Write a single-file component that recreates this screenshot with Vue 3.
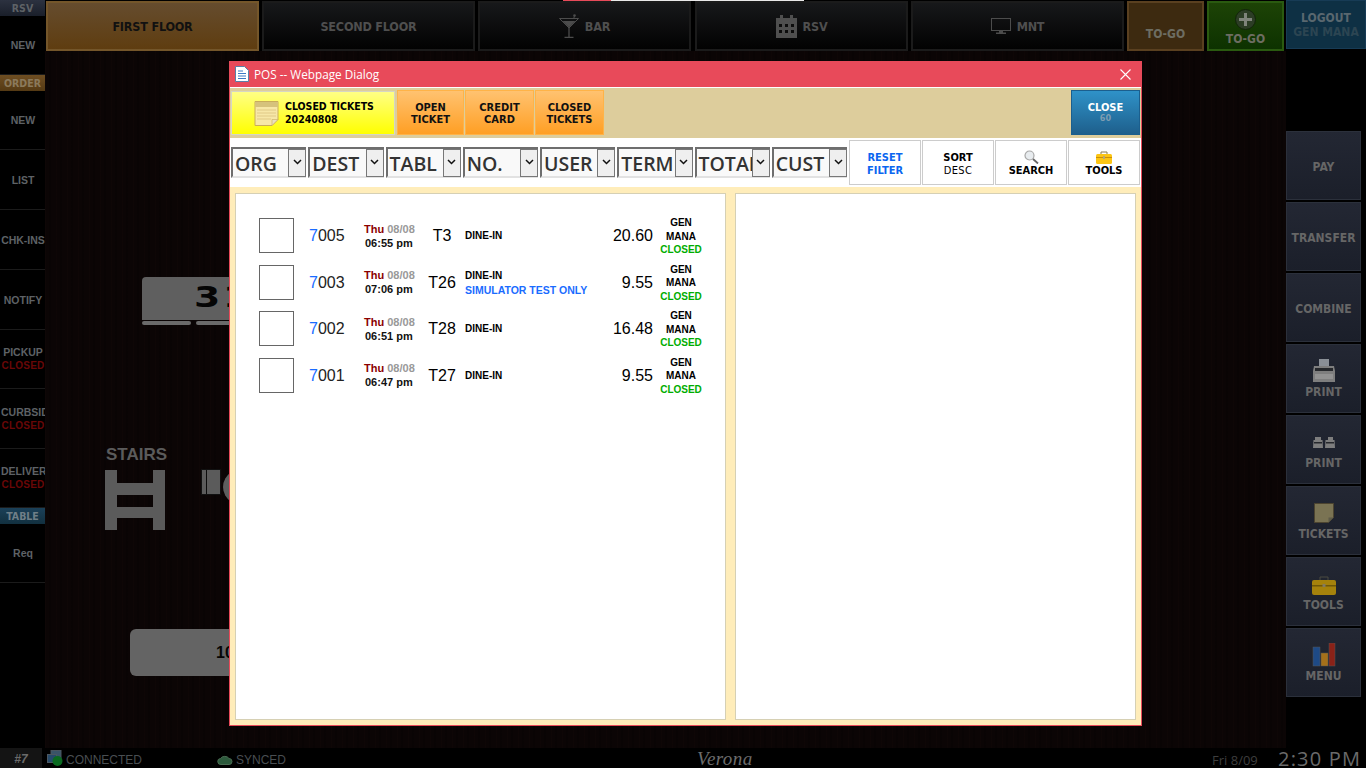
<script setup>
const sideItems = [
  { head: 'RSV', tone: 'navy' },
  { label: 'NEW', h: 59 },
  { head: 'ORDER', tone: 'amber' },
  { label: 'NEW', h: 59 },
  { label: 'LIST', h: 60 },
  { label: 'CHK-INS', h: 60 },
  { label: 'NOTIFY', h: 60 },
  { label: 'PICKUP', sub: 'CLOSED', h: 59 },
  { label: 'CURBSIDE', sub: 'CLOSED', h: 60 },
  { label: 'DELIVERY', sub: 'CLOSED', h: 59 },
  { head: 'TABLE', tone: 'teal' },
  { label: 'Req', h: 59 },
]

const filters = ['ORG', 'DEST', 'TABL', 'NO.', 'USER', 'TERM', 'TOTAL', 'CUST']

const tickets = [
  { id: '005', time: '06:55 pm', table: 'T3', amount: '20.60' },
  { id: '003', time: '07:06 pm', table: 'T26', note: 'SIMULATOR TEST ONLY', amount: '9.55' },
  { id: '002', time: '06:51 pm', table: 'T28', amount: '16.48' },
  { id: '001', time: '06:47 pm', table: 'T27', amount: '9.55' },
]
</script>

<template>
  <div class="pos">
    <div class="progress"><span></span></div>

    <div class="main">
      <aside class="side">
        <template v-for="(item, i) in sideItems" :key="i">
          <div v-if="item.head" class="side-head" :class="item.tone">{{ item.head }}</div>
          <div v-else class="side-item" :style="{ height: item.h + 'px' }">
            <div>{{ item.label }}</div>
            <div v-if="item.sub" class="side-sub">{{ item.sub }}</div>
          </div>
        </template>
      </aside>

      <div class="stage">
        <header class="top">
          <button class="tab active">FIRST FLOOR</button>
          <button class="tab">SECOND FLOOR</button>
          <button class="tab">
            <svg width="20" height="24" viewBox="0 0 20 24">
              <path d="M.5 4.500h19L10 14z" fill="none" stroke="#4c4c4c" />
              <path d="M3.500 7h13L10 13.500z" fill="#4c4c4c" />
              <path d="M10 14v9M5.500 23.500h9" stroke="#4c4c4c" stroke-width="1.300" />
              <path d="M14.500 5l1-3" stroke="#4c4c4c" />
              <circle cx="15.500" cy="1.500" r="1.300" fill="#4c4c4c" />
            </svg>
            BAR
          </button>
          <button class="tab">
            <svg width="21" height="24" viewBox="0 0 21 24">
              <path d="M0 4h4V1h3v3h7V1h3v3h4v20H0z" fill="#4f4f4f" />
              <g fill="#0c0c0c">
                <rect x="3" y="10" width="3" height="3" /><rect x="9" y="10" width="3" height="3" /><rect x="15" y="10" width="3" height="3" />
                <rect x="3" y="16" width="3" height="3" /><rect x="9" y="16" width="3" height="3" /><rect x="15" y="16" width="3" height="3" />
              </g>
            </svg>
            RSV
          </button>
          <button class="tab">
            <svg width="20" height="16" viewBox="0 0 20 16">
              <rect x="0.500" y="0.500" width="19" height="12" fill="none" stroke="#4c4c4c" />
              <path d="M8 13h4v1.500h3V16H5v-1.500h3z" fill="#4c4c4c" />
            </svg>
            MNT
          </button>
          <button class="togo brown"><span>TO-GO</span></button>
          <button class="togo green">
            <svg class="plus" width="21" height="21" viewBox="0 0 21 21">
              <circle cx="10.500" cy="10.500" r="10" fill="#2c3d25" stroke="#12240a" />
              <path d="M9 4h3v5h5v3h-5v5H9v-5H4V9h5z" fill="#7f847b" />
            </svg>
            <span>TO-GO</span>
          </button>
          <button class="logout">
            <span>LOGOUT</span>
            <span class="logout-user">GEN MANA</span>
          </button>
        </header>

        <div class="body">
          <div class="floor">
            <div class="floor-table big">
              <span>31</span>
              <i class="foot"></i><i class="foot"></i>
            </div>
            <div class="stairs">
              <span>STAIRS</span>
              <svg width="60" height="60" viewBox="0 0 60 60">
                <path d="M0 0h12v13h36V0h12v60H48V48H12v12H0zM12 25v12h36V25z" fill="#5b5b5b" fill-rule="evenodd" />
              </svg>
            </div>
            <div class="floor-box"></div>
            <div class="floor-round"></div>
            <div class="floor-table wide"><b>10</b></div>
          </div>

          <nav class="rail">
            <button class="rail-btn">PAY</button>
            <button class="rail-btn">TRANSFER</button>
            <button class="rail-btn">COMBINE</button>
            <button class="rail-btn has-icon">
              <svg width="24" height="24" viewBox="0 0 24 24">
                <path d="M7 0h10v8H7z" fill="#8a8f96" />
                <path d="M2 7h20l1 5v11H1V12z" fill="#7e7e7e" />
                <path d="M3 9h18v3H3z" fill="#26282c" />
                <path d="M3 15h18v5H3z" fill="#929292" />
              </svg>
              PRINT
            </button>
            <button class="rail-btn has-icon gap-7">
              <svg width="24" height="12" viewBox="0 0 24 12">
                <g fill="#7e7e7e">
                  <path d="M3 0h6v3h1.500L11 11H1l.5-8H3z" />
                  <path d="M16 0h5v3h1.500L23 11H13l.5-8H16z" />
                </g>
                <path d="M2 5h8v1.500H2zM14 5h8v1.500h-8z" fill="#26282c" />
              </svg>
              PRINT
            </button>
            <button class="rail-btn has-icon gap-4">
              <svg width="20" height="20" viewBox="0 0 20 20">
                <path d="M.5.500h19v14l-5 5H.500z" fill="#7a7353" stroke="#4c4430" />
                <path d="M14.500 19.500v-5h5z" fill="#5d5a48" />
              </svg>
              TICKETS
            </button>
            <button class="rail-btn has-icon gap-3">
              <svg width="24" height="19" viewBox="0 0 24 19">
                <path d="M8 4V1h8v3" fill="none" stroke="#4a4a40" />
                <rect y="4" width="24" height="15" rx="2" fill="#a5820c" />
                <rect y="9" width="24" height="1.500" fill="#6e5708" />
                <rect x="10.500" y="8" width="3" height="3" fill="#827a60" />
              </svg>
              TOOLS
            </button>
            <button class="rail-btn has-icon">
              <svg width="24" height="24" viewBox="0 0 24 24">
                <rect x="1" y="4" width="7" height="19" fill="#1e4a86" stroke="#555" stroke-width=".5" />
                <rect x="9" y="10" width="7" height="13" fill="#a5701a" stroke="#555" stroke-width=".5" />
                <rect x="17" y="0" width="6" height="23" fill="#8a2218" stroke="#555" stroke-width=".5" />
              </svg>
              MENU
            </button>
          </nav>
        </div>
      </div>
    </div>

    <footer class="status">
      <div class="station">#7</div>
      <svg class="net" width="16" height="16" viewBox="0 0 16 16">
        <rect x="4" y="0.500" width="10" height="8" fill="#3a5468" stroke="#4b5660" />
        <rect x="0.500" y="4.500" width="9" height="8" fill="#264a6a" stroke="#4b5660" />
        <circle cx="10.500" cy="11" r="5" fill="#0a6a20" />
      </svg>
      <span class="status-text conn">CONNECTED</span>
      <svg class="cloud" width="16" height="11" viewBox="0 0 16 11">
        <path d="M4 10.500a3 3 0 0 1-.500-6A5 4.500 0 0 1 12 4.500a3 3 0 0 1 0 6z" fill="#2c5a3c" stroke="#4a6a52" />
      </svg>
      <span class="status-text">SYNCED</span>
      <span class="brand">Verona</span>
      <span class="date">Fri 8/09</span>
      <span class="clock">2:30 PM</span>
    </footer>

    <section class="dialog">
      <div class="titlebar">
        <svg width="14" height="16" viewBox="0 0 14 16">
          <path d="M.5.500h9l4 4v11H.5z" fill="#fff" stroke="#5a7fa8" />
          <path d="M3 5h5M3 7.500h8M3 10h8M3 12.500h8" stroke="#3b78c4" />
        </svg>
        <span class="title">POS -- Webpage Dialog</span>
        <svg class="x" width="11" height="11" viewBox="0 0 11 11">
          <path d="M.5.500l10 10M10.500.500l-10 10" stroke="#fff" stroke-width="1.100" />
        </svg>
      </div>

      <div class="toolbar">
        <div class="current">
          <svg width="25" height="25" viewBox="0 0 25 25">
            <path d="M1 .5h23v18l-6 6H1z" fill="#f7e7a8" stroke="#c9ac5c" />
            <path d="M1 1h23v5H1z" fill="#d6c27c" />
            <path d="M3 9h19M3 12h19M3 15h19M3 18h14" stroke="#e0c987" />
            <path d="M18 24.500v-6h6z" fill="#e9e0c0" stroke="#c9ac5c" stroke-width=".6" />
          </svg>
          <div class="current-text">CLOSED TICKETS<br />20240808</div>
        </div>
        <button class="orange">OPEN<br />TICKET</button>
        <button class="orange">CREDIT<br />CARD</button>
        <button class="orange">CLOSED<br />TICKETS</button>
        <button class="close">CLOSE<small>60</small></button>
      </div>

      <div class="filters">
        <div v-for="f in filters" :key="f" class="select">
          <span class="select-text">{{ f }}</span>
          <span class="select-arrow">
            <svg width="9" height="6" viewBox="0 0 9 6"><path d="M1 1l3.500 3.500L8 1" fill="none" stroke="#111" stroke-width="1.500" /></svg>
          </span>
        </div>
        <button class="tool blue">RESET<br />FILTER</button>
        <button class="tool">SORT<br /><span class="thin">DESC</span></button>
        <button class="tool">
          <svg width="15" height="14" viewBox="0 0 15 14">
            <circle cx="5.500" cy="5.500" r="4.500" fill="#e8ecef" stroke="#a8a8a8" stroke-width="1.200" />
            <path d="M9 9l5 4.500" stroke="#666" stroke-width="1.800" />
          </svg>
          SEARCH
        </button>
        <button class="tool">
          <svg width="16" height="13" viewBox="0 0 16 13">
            <path d="M5 3V1h6v2" fill="none" stroke="#8a7a50" />
            <rect y="3" width="16" height="10" rx="1.500" fill="#fcc514" />
            <rect y="6" width="16" height="1" fill="#c98f08" />
            <rect x="7" y="5" width="2" height="3" fill="#b8a878" />
          </svg>
          TOOLS
        </button>
      </div>

      <div class="panels">
        <div class="panel list">
          <div v-for="t in tickets" :key="t.id" class="ticket">
            <div class="check"></div>
            <div class="num"><span class="num-lead">7</span>{{ t.id }}</div>
            <div class="when">
              <div><span class="day">Thu</span> <span class="dim">08/08</span></div>
              <div class="time">{{ t.time }}</div>
            </div>
            <div class="tbl">{{ t.table }}</div>
            <div class="kind">
              <div>DINE-IN</div>
              <div v-if="t.note" class="note">{{ t.note }}</div>
            </div>
            <div class="amount">{{ t.amount }}</div>
            <div class="who">
              <div>GEN</div>
              <div>MANA</div>
              <div class="closed">CLOSED</div>
            </div>
          </div>
        </div>
        <div class="panel"></div>
      </div>
    </section>
  </div>
</template>

<style>
html,
body {
  margin: 0;
  background: #000;
}
</style>

<style scoped>
.pos {
  position: relative;
  width: 1366px;
  height: 768px;
  overflow: hidden;
  background: #000;
  font-family: "Liberation Sans", Arial, sans-serif;
  display: flex;
  flex-direction: column;
}

button {
  font-family: "DejaVu Sans Condensed", "DejaVu Sans", sans-serif;
  font-stretch: condensed;
  font-weight: 700;
  margin: 0;
  padding: 0;
  cursor: pointer;
}

.progress {
  position: absolute;
  top: 0;
  left: 563px;
  width: 241px;
  height: 1px;
  background: #e9e9e9;
  z-index: 3;
}

.progress span {
  display: block;
  width: 48px;
  height: 1px;
  background: #e84a5a;
}

.main {
  flex: 1;
  display: flex;
  min-height: 0;
}

/* left column */
.side {
  width: 45px;
  flex: none;
  background: #000;
  font-size: 10.500px;
  font-weight: 700;
  color: #5e6266;
}

.side-head {
  height: 16px;
  line-height: 16px;
  text-align: center;
  font: 700 10.500px/16px "DejaVu Sans Condensed", "DejaVu Sans", sans-serif;
  font-stretch: condensed;
}

.navy {
  background: linear-gradient(#2c3240, #1a1f2a);
}

.amber {
  background: linear-gradient(#6e4e22, #553a14);
  color: #8b7a5c;
}

.teal {
  background: linear-gradient(#1b4058, #12303f);
  color: #6f7f88;
}

.side-item {
  box-sizing: border-box;
  border-bottom: 1px solid #1b1b1b;
  padding-left: 1px;
  display: flex;
  flex-direction: column;
  justify-content: center;
  text-align: center;
  overflow: hidden;
  white-space: nowrap;
  line-height: 14px;
}

.side-sub {
  color: #6a0707;
  font-size: 10px;
  letter-spacing: 0.2px;
}

.stage {
  flex: 1;
  display: flex;
  flex-direction: column;
  min-width: 0;
}

/* top bar */
.top {
  height: 51px;
  flex: none;
  display: flex;
  background: #000;
  padding: 1px 0 0 1px;
  box-sizing: border-box;
}

.tab {
  width: 213px;
  height: 50px;
  margin-right: 3px;
  display: flex;
  align-items: center;
  justify-content: center;
  gap: 6px;
  border: 2px solid #1b1b1b;
  background: linear-gradient(#17181a, #020202);
  color: #4f4f4f;
  font-size: 12.500px;
  letter-spacing: -0.2px;
}

.tab:nth-child(3) {
  margin-right: 4px;
}

.tab.active {
  border-color: #74562a;
  background: linear-gradient(#654c2e, #5f3d10);
  color: #111;
}

.togo {
  width: 77px;
  height: 50px;
  margin-right: 3px;
  border: 2px solid;
  font-size: 12px;
  display: flex;
  flex-direction: column;
  align-items: center;
  justify-content: flex-end;
  color: #6d6d62;
}

.togo.brown {
  border-color: #5a4020;
  background: #3d2a10;
  padding-bottom: 8px;
}

.togo.green {
  border-color: #2a5a10;
  background: linear-gradient(#1d4306, #0d3200);
  padding-bottom: 3px;
  margin-right: 2px;
}

.plus {
  margin-bottom: 2px;
}

.logout {
  width: 80px;
  height: 49px;
  border: 1px solid #173b55;
  background: #0e3044;
  color: #59676f;
  font-size: 12px;
  display: flex;
  flex-direction: column;
  align-items: center;
  justify-content: center;
  line-height: 14px;
  position: relative;
  top: -1px;
}

.logout-user {
  color: #2c4552;
}

.body {
  flex: 1;
  display: flex;
  min-height: 0;
}

/* dimmed floor plan, free canvas */
.floor {
  position: relative;
  flex: 1;
  background:
    repeating-linear-gradient(90deg, rgba(40, 18, 14, 0.1) 0 1px, transparent 1px 4px, rgba(0, 0, 0, 0.18) 4px 6px, transparent 6px 11px),
    #0b0505;
}

.floor-table {
  position: absolute;
  background: #5f5f5f;
  border-radius: 4px;
  color: #050505;
  box-sizing: border-box;
}

.floor-table.big {
  left: 97px;
  top: 226px;
  width: 140px;
  height: 43px;
  border-radius: 4px 0 0 0;
}

.floor-table.big span {
  position: absolute;
  left: 52px;
  top: 1px;
  font: 700 28px/40px "DejaVu Sans", sans-serif;
  letter-spacing: 2px;
  transform: scaleX(1.35);
  transform-origin: left center;
}

.foot {
  position: absolute;
  top: 44px;
  left: 0;
  width: 49px;
  height: 4px;
  background: #6a6a6a;
  border-radius: 2px;
}

.foot + .foot {
  left: 54px;
  width: 80px;
}

.floor-table.wide {
  left: 85px;
  top: 578px;
  width: 190px;
  height: 47px;
  border-radius: 6px;
  background: #646464;
  text-align: center;
  font-size: 16px;
  line-height: 47px;
}

.stairs {
  position: absolute;
  left: 60px;
  top: 392px;
  color: #5b5b5b;
  font-size: 17px;
  font-weight: 700;
  width: 62px;
}

.stairs span {
  display: block;
  height: 27px;
  line-height: 24px;
  padding-left: 1px;
}

.stairs svg {
  display: block;
}

.floor-box {
  position: absolute;
  left: 157px;
  top: 419px;
  width: 18px;
  height: 24px;
  background: linear-gradient(90deg, #5b5b5b 0 4px, #0b0b0b 4px 5px, #5b5b5b 5px);
  outline: 1px solid #111;
}

.floor-round {
  position: absolute;
  left: 178px;
  top: 414px;
  width: 60px;
  height: 44px;
  border-radius: 50%;
  background: #5e5e5e;
}

/* right column */
.rail {
  width: 80px;
  flex: none;
  height: 664px;
  background: #000;
  padding-top: 80px;
  box-sizing: border-box;
  display: flex;
  flex-direction: column;
  gap: 2px;
}

.rail-btn {
  width: 75px;
  height: 69px;
  flex: none;
  box-sizing: border-box;
  border: 1px solid #2b303b;
  background: linear-gradient(#232733, #1b1f2a);
  color: #666;
  font-size: 12px;
  line-height: 14px;
  padding-top: 2px;
  display: flex;
  flex-direction: column;
  align-items: center;
  justify-content: center;
}

/* label sits at the same height in every button with an icon */
.has-icon {
  justify-content: flex-end;
  padding: 0 0 13px;
}

.has-icon svg {
  margin-bottom: 2px;
}

.gap-7 svg {
  margin-bottom: 7px;
}

.gap-4 svg {
  margin-bottom: 4px;
}

.gap-3 svg {
  margin-bottom: 3px;
}

/* bottom bar */
.status {
  height: 20px;
  flex: none;
  display: flex;
  align-items: flex-end;
  background: #000;
  font-size: 12px;
  color: #494e52;
}

.station {
  width: 42px;
  height: 20px;
  line-height: 22px;
  text-align: center;
  background: #141414;
  font-weight: 700;
  font-style: italic;
  color: #6a6a6a;
}

.net {
  margin-left: 5px;
  margin-bottom: 2px;
}

.status-text {
  margin-left: 3px;
  font-size: 12px;
  line-height: 16px;
}

.conn {
  width: 151px;
}

.cloud {
  margin-bottom: 3px;
}

.brand {
  margin-left: 411px;
  width: 515px;
  font: italic 19px/18px "Liberation Serif", serif;
  letter-spacing: 0.4px;
  color: #6c6c6c;
}

.date {
  font-size: 13px;
  line-height: 16px;
  color: #3e3e3e;
  width: 66px;
  font-family: "Open Sans", sans-serif;
}

.clock {
  font: 20px/18px "Open Sans", sans-serif;
  letter-spacing: 1.200px;
  color: #6a6a6a;
}

/* dialog over the floor */
.dialog {
  position: absolute;
  left: 229px;
  top: 61px;
  width: 913px;
  height: 665px;
  box-sizing: border-box;
  border: 1px solid #e84a5a;
  border-top: 0;
  display: flex;
  flex-direction: column;
  background: #fff;
  z-index: 2;
}

.titlebar {
  height: 26px;
  flex: none;
  display: flex;
  align-items: center;
  padding-left: 5px;
  background: #e84a5a;
  color: #fff;
  font: 11.750px "Open Sans", sans-serif;
}

.title {
  margin-left: 5px;
  flex: 1;
}

.x {
  margin-right: 10px;
}

.toolbar {
  height: 51px;
  flex: none;
  box-sizing: border-box;
  display: flex;
  align-items: flex-start;
  gap: 2px;
  padding: 2px 1px 0 1px;
  background: #ddcd9c;
  border-top: 1px solid #fff;
}

.current {
  box-sizing: border-box;
  width: 164px;
  height: 44px;
  margin-top: 1px;
  border: 1px solid #d6d6c4;
  background: linear-gradient(#ffff85, #ffff00);
  display: flex;
  align-items: center;
  padding-left: 22px;
  gap: 6px;
}

.current-text {
  color: #000;
  font: 700 10.500px/13px "DejaVu Sans Condensed", "DejaVu Sans", sans-serif;
  font-stretch: condensed;
}

.orange {
  width: 67px;
  height: 45px;
  box-sizing: border-box;
  border: 1px solid #ffb347;
  background: linear-gradient(#ffc270, #ff9f24);
  color: #111;
  font-size: 11px;
  line-height: 12px;
  padding-top: 2px;
}

.orange + .orange {
  margin-left: -1px;
  width: 69px;
}

.close {
  margin-left: auto;
  width: 69px;
  height: 45px;
  border: 1px solid #1b5f8e;
  background: linear-gradient(#2f92c8, #1e5f8c);
  color: #fff;
  font-size: 11px;
  display: flex;
  flex-direction: column;
  align-items: center;
  justify-content: center;
  line-height: 11.500px;
  padding-top: 1px;
}

.close small {
  font-size: 9px;
  color: #7d9db2;
}

.filters {
  height: 49px;
  flex: none;
  box-sizing: border-box;
  display: flex;
  align-items: center;
  padding-left: 1px;
  background: #fff;
}

.select {
  width: 75.250px;
  height: 31px;
  box-sizing: border-box;
  flex: none;
  display: flex;
  margin-right: 2px;
  border-top: 2px solid #6e6e6e;
  border-left: 2px solid #6e6e6e;
  border-bottom: 2px solid #e2e2e2;
  background: #f9f9f9;
}

.select-text {
  flex: 1;
  min-width: 0;
  box-sizing: border-box;
  padding-left: 2px;
  overflow: hidden;
  white-space: nowrap;
  font: 600 19.500px/29px "Open Sans", sans-serif;
  color: #333;
}

.select-arrow {
  width: 18px;
  height: 28px;
  flex: none;
  box-sizing: border-box;
  border: 1px solid #777;
  background: #efefef;
  display: flex;
  align-items: center;
  justify-content: center;
  padding-bottom: 2px;
}

.tool {
  width: 72px;
  height: 45px;
  box-sizing: border-box;
  flex: none;
  margin-left: 1px;
  padding-top: 2px;
  border: 1px solid #ccc;
  background: #fff;
  color: #000;
  font-size: 11px;
  line-height: 13px;
  display: flex;
  flex-direction: column;
  align-items: center;
  justify-content: center;
}

.tool.blue {
  color: #0a66f0;
  margin-left: 0;
}

.thin {
  font-weight: 400;
  letter-spacing: 0.4px;
}

.panels {
  flex: 1;
  display: flex;
  gap: 9px;
  padding: 6px 5px 5px;
  background: #ffedba;
  min-height: 0;
}

.panel {
  flex: 1;
  box-sizing: border-box;
  background: #fff;
  border: 1px solid #d6d0b4;
}

.list {
  flex: none;
  width: 491px;
  padding-top: 18.500px;
}

.ticket {
  height: 46.500px;
  display: grid;
  grid-template-columns: 23px 35px 15px 55px 50px 51px 125px 63px 56px;
  align-items: center;
  color: #000;
}

.check {
  grid-column: 2;
  box-sizing: border-box;
  width: 35px;
  height: 35px;
  border: 1px solid #666;
}

.num {
  grid-column: 4;
  font-size: 16px;
  color: #222;
  padding-top: 1px;
}

.num-lead {
  color: #1a6cff;
}

.when {
  font-size: 11px;
  font-weight: 700;
  line-height: 14px;
  white-space: nowrap;
}

.day {
  color: #8b0000;
}

.dim {
  color: #999;
}

.time {
  color: #111;
  padding-left: 1px;
}

.tbl {
  font-size: 16px;
  text-align: center;
  padding: 1px 0 0 5px;
  white-space: nowrap;
}

.kind {
  font-size: 10px;
  font-weight: 700;
  line-height: 14px;
  white-space: nowrap;
  padding-top: 1px;
}

.note {
  color: #1a6cff;
  font-size: 10.500px;
}

.amount {
  font-size: 16px;
  text-align: right;
  padding-top: 1px;
}

.who {
  font-size: 10px;
  font-weight: 700;
  line-height: 13.500px;
  text-align: center;
  padding-top: 1px;
}

.closed {
  color: #00ad00;
}
</style>
